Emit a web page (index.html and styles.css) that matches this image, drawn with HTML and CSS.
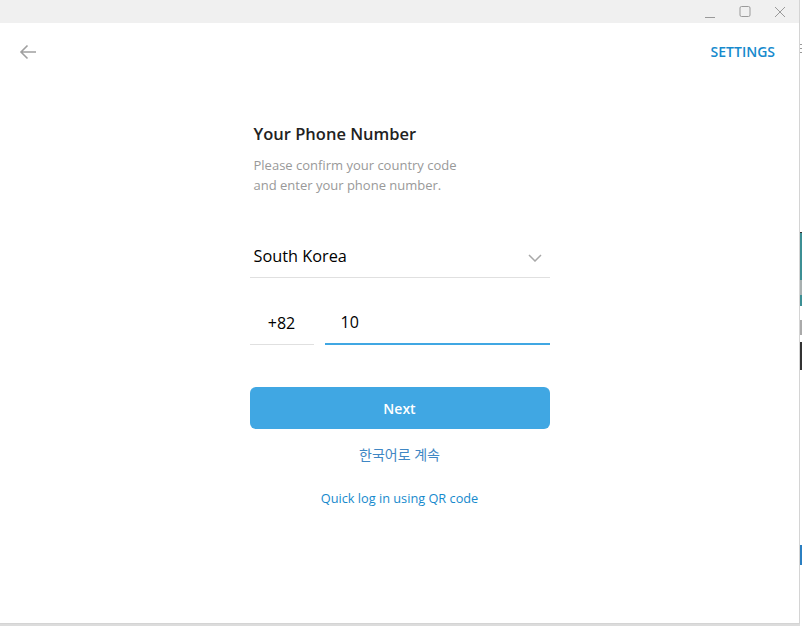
FILE: index.html
```html
<!DOCTYPE html>
<html lang="en">
<head>
	<meta charset="UTF-8">
	<meta name="viewport" content="width=device-width, initial-scale=1.0">
	<title>Telegram</title>
	<link rel="stylesheet" href="styles.css">
</head>
<body>
	<div class="desktop">
		<div class="window">
			<div class="titlebar">
				<span class="ctl">
					<svg width="12" height="12" viewBox="0 0 12 12"><path d="M1 11.5h10" stroke="#9a9a9a" stroke-width="1"/></svg>
				</span>
				<span class="ctl">
					<svg width="12" height="12" viewBox="0 0 12 12"><rect x="1" y="0.5" width="10" height="10" rx="1.5" fill="none" stroke="#9a9a9a" stroke-width="1"/></svg>
				</span>
				<span class="ctl">
					<svg width="12" height="12" viewBox="0 0 12 12"><path d="M1 1l10 10M11 1L1 11" stroke="#9a9a9a" stroke-width="1"/></svg>
				</span>
			</div>

			<div class="topbar">
				<button class="back" aria-label="Back">
					<svg width="18" height="16" viewBox="0 0 18 16"><path d="M17 8H2M8.5 1.5L2 8l6.5 6.5" fill="none" stroke="#a0a0a0" stroke-width="1.6"/></svg>
				</button>
				<a class="settings" href="#">SETTINGS</a>
			</div>

			<div class="form">
				<h1>Your Phone Number</h1>
				<p class="description">Please confirm your country code<br>and enter your phone number.</p>

				<div class="field country">
					<span>South Korea</span>
					<svg width="14" height="8" viewBox="0 0 14 8"><path d="M1 1l6 6 6-6" fill="none" stroke="#a8a8a8" stroke-width="1.5"/></svg>
				</div>

				<div class="phone-row">
					<div class="field code">+82</div>
					<div class="field number active">10</div>
				</div>

				<button class="btn">Next</button>

				<a class="link lang" href="#">한국어로 계속</a>
				<a class="link qr" href="#">Quick log in using QR code</a>
			</div>
		</div>

		<div class="behind">
			<span class="b-lines"></span>
			<span class="b-gap1"></span>
			<span class="b-teal"></span>
			<span class="b-gray"></span>
			<span class="b-teal2"></span>
			<span class="b-gap2"></span>
			<span class="b-gray2"></span>
			<span class="b-gap3"></span>
			<span class="b-dark"></span>
			<span class="b-gap4"></span>
			<span class="b-blue"></span>
		</div>
	</div>
</body>
</html>
```

FILE: styles.css
```css
* {
	margin: 0;
	padding: 0;
	box-sizing: border-box;
}

body {
	font-family: 'Open Sans', 'Noto Sans CJK KR', sans-serif;
	background: #dcdcdc;
	width: 802px;
	height: 626px;
	overflow: hidden;
}

.desktop {
	display: flex;
	height: 626px;
}

.window {
	width: 800px;
	height: 624px;
	background: #fff;
	border-right: 1px solid #d4d4d4;
	border-bottom: 1px solid #d4d4d4;
	display: flex;
	flex-direction: column;
	flex-shrink: 0;
}

.titlebar {
	height: 23px;
	background: #f0f0f0;
	display: flex;
	justify-content: flex-end;
	align-items: center;
	padding-right: 13px;
	gap: 23px;
}

.ctl {
	display: flex;
	width: 12px;
	height: 12px;
}

.topbar {
	height: 56px;
	display: flex;
	align-items: center;
	justify-content: space-between;
	padding: 0 24px 0 19px;
}

.back {
	border: none;
	background: none;
	display: flex;
	cursor: pointer;
	margin-top: 2px;
}

.settings {
	color: #168acd;
	font-size: 14px;
	font-weight: 550;
	text-decoration: none;
}

.form {
	width: 300px;
	margin: 44px auto 0;
	display: flex;
	flex-direction: column;
}

h1 {
	font-size: 16.5px;
	font-weight: 600;
	color: #222;
	line-height: 22px;
	padding-left: 4px;
}

.description {
	margin-top: 10px;
	font-size: 13px;
	line-height: 20px;
	color: #999;
	padding-left: 4px;
}

.field {
	height: 44px;
	display: flex;
	align-items: center;
	border-bottom: 1px solid #e0e0e0;
	font-size: 16px;
	color: #000;
}

.country {
	margin-top: 39px;
	justify-content: space-between;
	padding: 0 8px 0 4px;
	font-size: 16.3px;
}

.country svg {
	margin-top: 4px;
}

.phone-row {
	margin-top: 23px;
	display: flex;
	gap: 11px;
}

.code {
	width: 64px;
	justify-content: center;
}

.number {
	flex: 1;
	padding-left: 16px;
}

.number.active {
	border-bottom: 2px solid #40a7e3;
}

.btn {
	margin-top: 42px;
	height: 42px;
	border: none;
	border-radius: 6px;
	background: #40a7e3;
	color: #fff;
	font-family: inherit;
	font-size: 14px;
	font-weight: 600;
	cursor: pointer;
}

.link {
	color: #168acd;
	font-size: 12.75px;
	line-height: 20px;
	text-align: center;
	text-decoration: none;
}

.lang {
	margin-top: 16px;
	color: #3f87c4;
	font-size: 14px;
}

.qr {
	margin-top: 23px;
}

.behind {
	flex: 1;
	display: flex;
	flex-direction: column;
	background: #fff;
}

.behind span {
	display: block;
}

.b-lines {
	margin-top: 44px;
	border-top: 1px solid #999;
	background: repeating-linear-gradient(#fff 0 3px, #999 3px 4px);
	height: 12px;
}

.b-gap1 { height: 176px; }
.b-teal { height: 48px; background: #3c8f94; border-top: 1px solid #333; }
.b-gray { height: 15px; background: #a8b0b0; }
.b-teal2 { height: 11px; background: #3c8f94; }
.b-gap2 { height: 14px; }
.b-gray2 { height: 15px; background: #aaa; }
.b-gap3 { height: 7px; }
.b-dark { height: 28px; background: #333; }
.b-gap4 { height: 175px; }
.b-blue { height: 20px; background: #2b7fc1; }
```
